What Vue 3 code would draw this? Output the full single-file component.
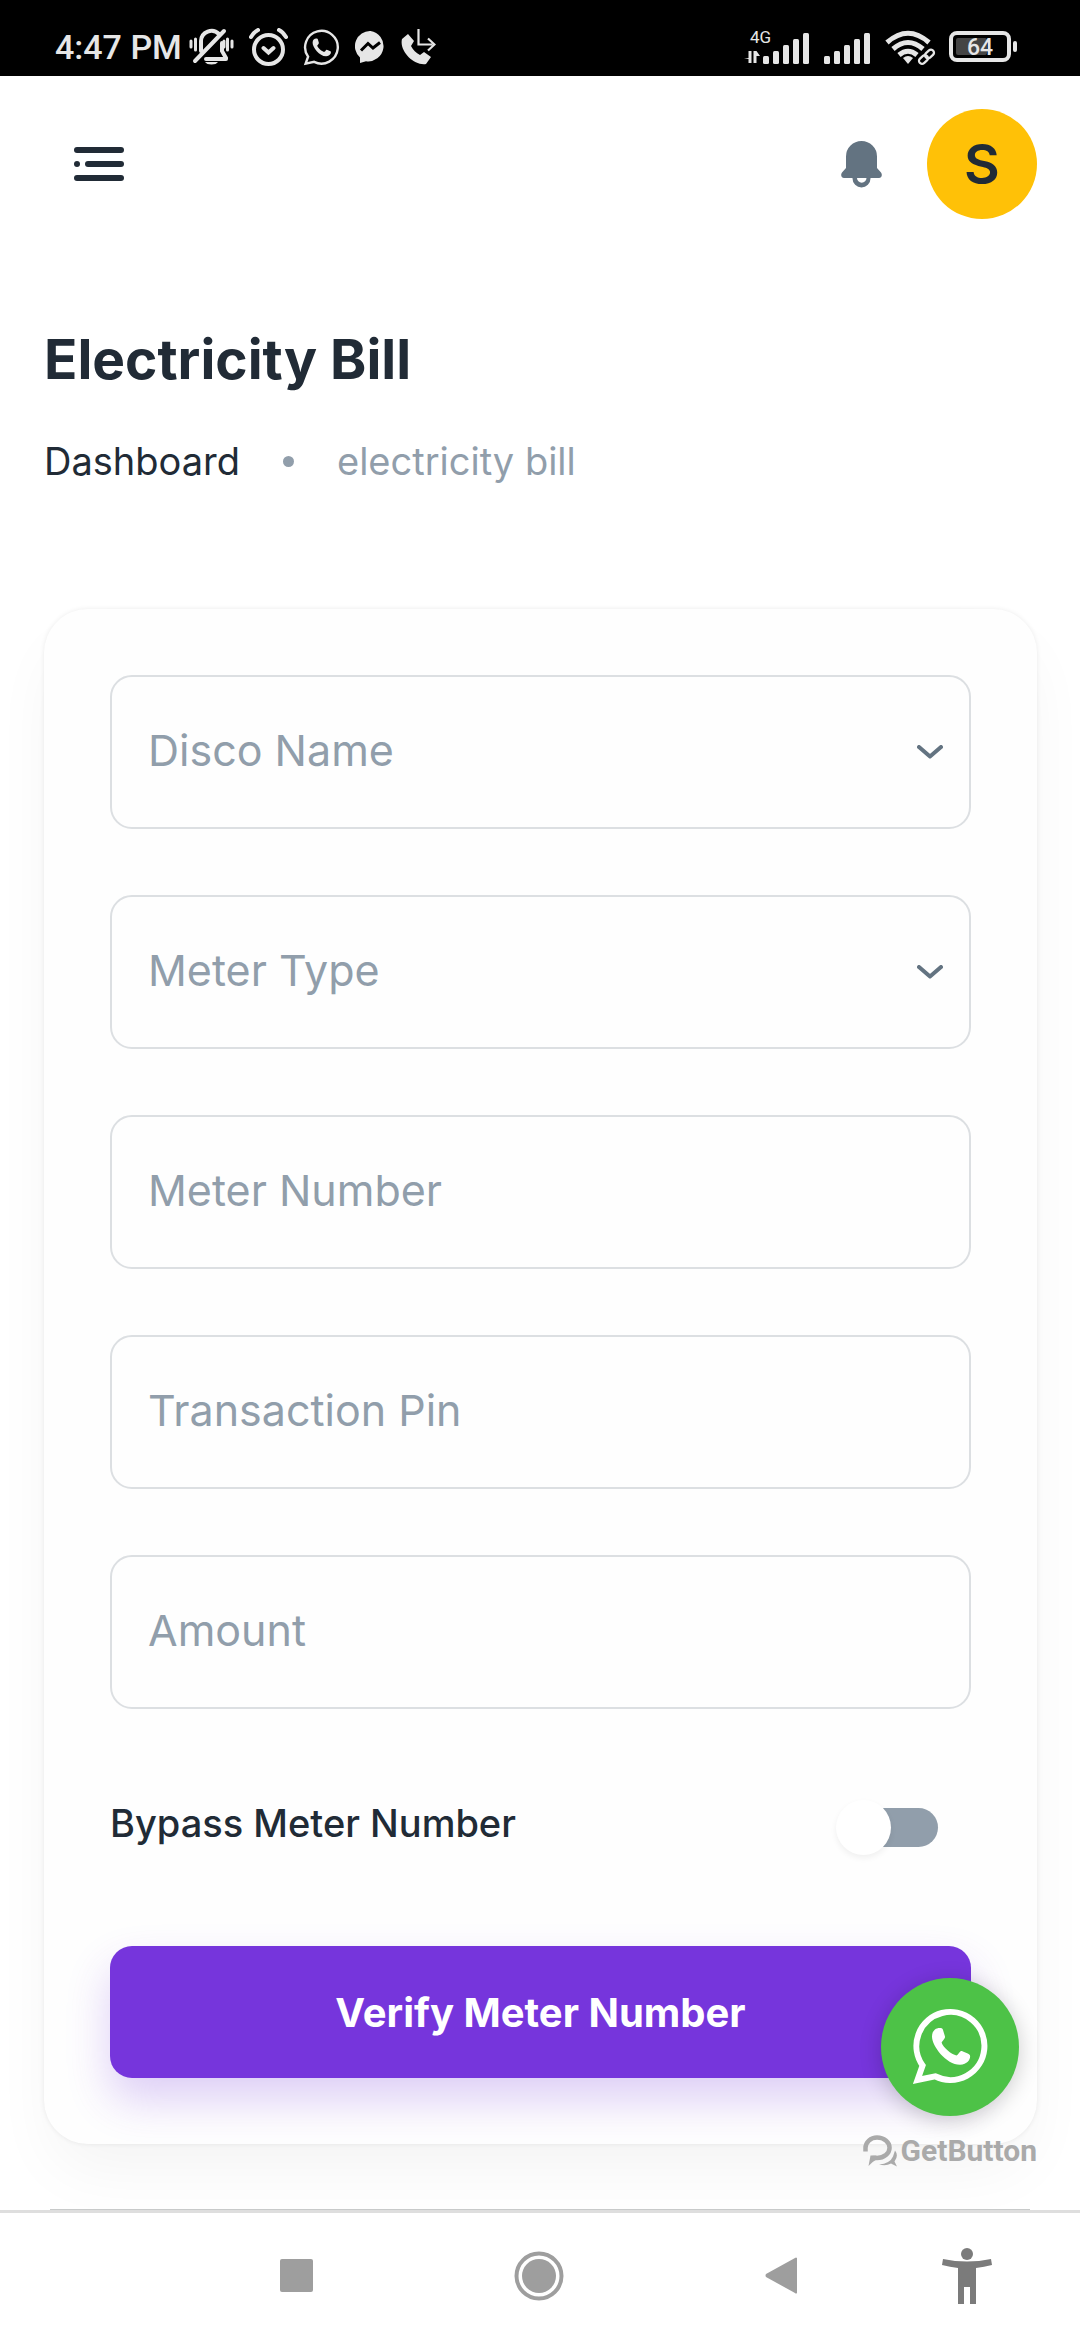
<script setup>
import { reactive, ref } from 'vue'

const fields = [
  { id: 'disco', label: 'Disco Name', options: ['Ikeja Electric', 'Eko Electric', 'Abuja Electric'] },
  { id: 'type', label: 'Meter Type', options: ['Prepaid', 'Postpaid'] },
  { id: 'meter', label: 'Meter Number', type: 'text' },
  { id: 'pin', label: 'Transaction Pin', type: 'password' },
  { id: 'amount', label: 'Amount', type: 'text' },
]
const form = reactive({ disco: '', type: '', meter: '', pin: '', amount: '' })
const bypass = ref(false)
const bars = [8, 13, 19, 25, 31]
</script>

<template>
  <div class="page">
    <header class="status">
      <div class="status-left">
        <span class="clock">4:47 PM</span>
        <svg width="45" height="38" viewBox="0 0 45 38" fill="none" stroke="#e6e6e6" stroke-linecap="round">
          <path stroke-width="3" d="M2 13v6M6.500 11v11M43 13v6M38.500 11v11M35 13v6" />
          <path stroke-width="4" d="M12 23V13a10.500 10.500 0 0 1 18-7M33 15v8l4 7M37 31H17" />
          <path stroke-width="4" d="M6 33L35 3" />
          <path fill="#e6e6e6" stroke="none" d="M16 34h13a7 4 0 0 1-13 0z" />
        </svg>
        <svg width="39" height="38" viewBox="0 0 39 38" fill="none" stroke="#e6e6e6" stroke-linecap="round">
          <circle cx="19.500" cy="21.500" r="14.500" stroke-width="4" />
          <path stroke-width="4" d="M2 9q3-5 7-7M37 9q-3-5-7-7M14.500 20l5 4.500 5-4.500" />
        </svg>
        <svg width="37" height="37" viewBox="31 30 77 77">
          <path fill="none" stroke="#e6e6e6" stroke-width="5" d="M41.600 87.500A34 34 0 1 1 54.100 98.300L36.500 102Z" />
          <path fill="#e6e6e6" d="M51 58.500C51 53 54.500 50 58.500 50C61 50 61.600 50.600 62 52L64 58.500C64.600 60.500 61.500 62.500 60.600 64.600C61.500 69 70.500 76.800 75.500 77.400C77.500 76.500 78.600 73.400 80 73C81 72.600 87 75.600 88.300 76.400C90.500 78 88.600 86.700 79 86.700C65 86.700 51 68 51 58.500Z" />
        </svg>
        <svg width="31" height="32" viewBox="0 0 31 32">
          <path fill="#e6e6e6" d="M15.500 0a15.200 15.200 0 1 1-4.500 30.200L5 32V26.500A15.200 15.200 0 0 1 15.500 0z" />
          <path fill="none" stroke="#000" stroke-width="3" d="M6 19.500l7-7 5 4.500 7-5.500" />
        </svg>
        <svg width="35" height="36" viewBox="0 0 35 36" fill="none" stroke="#e6e6e6">
          <path stroke-width="2.200" d="M17.500 0v15.500h14M27 9.500l6.500 6-6.500 6" />
          <path fill="#e6e6e6" stroke="none" d="M1 10l6-5 6 7-3 5c2 4 5 7 9 9l4-3 7 5-5 7C13 37-2 22 1 10z" />
        </svg>
      </div>
      <div class="status-right">
        <svg class="network" width="67" height="36" viewBox="0 0 67 36" fill="#e6e6e6">
          <text x="6" y="14" class="tiny">4G</text>
          <path d="M4.500 22h3v12h-3v-4L0 29h4.500zM9.500 22h3l3.500 5h-3.500v7h-3z" />
          <rect v-for="(h, i) in bars" :key="i" :x="19 + i * 10" :y="35 - h" width="6" :height="h" rx="1.500" />
        </svg>
        <svg width="48" height="36" viewBox="0 0 48 36" fill="#e6e6e6">
          <rect v-for="(h, i) in bars" :key="i" :x="i * 10" :y="35 - h" width="6" :height="h" rx="1.500" />
        </svg>
        <svg width="51" height="36" viewBox="0 0 51 36" fill="none" stroke="#e6e6e6">
          <path stroke-width="5" d="M2 13.500Q23 -5 44 13.500M8 20Q23 7 38 20M14 26Q23 18.500 32 26" />
          <path fill="#e6e6e6" stroke="none" d="M18 29q5-4 10 0l-5 6z" />
          <g stroke-width="2.300">
            <rect x="-5" y="-3" width="10" height="6" rx="3" transform="translate(38.500 30.500) rotate(-42)" />
            <rect x="-5" y="-3" width="10" height="6" rx="3" transform="translate(44.500 25) rotate(-42)" />
          </g>
        </svg>
        <svg width="69" height="32" viewBox="0 0 69 32">
          <rect x="2" y="2" width="58" height="27" rx="6" fill="none" stroke="#e6e6e6" stroke-width="4" />
          <rect x="7" y="7" width="31" height="17" rx="2" fill="#444" />
          <rect x="64" y="10" width="4" height="11" rx="2" fill="#e6e6e6" />
          <text x="31" y="24" text-anchor="middle" class="charge">64</text>
        </svg>
      </div>
    </header>

    <div class="screen">
      <div class="toolbar">
        <button class="icon-button" type="button" aria-label="Open menu">
          <svg width="50" height="34" viewBox="0 0 50 34" fill="#212b36">
            <rect width="50" height="6" rx="3" />
            <rect y="14" width="6" height="6" rx="3" />
            <rect x="11" y="14" width="39" height="6" rx="3" />
            <rect y="28" width="50" height="6" rx="3" />
          </svg>
        </button>
        <div class="actions">
          <button class="icon-button" type="button" aria-label="Notifications">
            <svg width="41" height="47" viewBox="0 0 41 47" fill="#637381">
              <path d="M5 15.500a15.500 15.500 0 0 1 31 0V27l4 4.500C42 34.500 40 37 38 37H3C1 37-1 34.500 1 31.500L5 27z" />
              <path d="M11.500 36v1.500a9 9 0 0 0 18 0V36h-4v1a4.700 4.700 0 0 1-9.500 0V36z" />
            </svg>
          </button>
          <button class="avatar" type="button" aria-label="Account">S</button>
        </div>
      </div>

      <main>
        <h1>Electricity Bill</h1>
        <nav class="crumbs" aria-label="Breadcrumb">
          <a href="#dashboard">Dashboard</a>
          <span class="dot"></span>
          <span>electricity bill</span>
        </nav>

        <form class="card" @submit.prevent>
          <div v-for="f in fields" :key="f.id" class="field">
            <select v-if="f.options" :id="f.id" v-model="form[f.id]">
              <option value=""></option>
              <option v-for="o in f.options" :key="o">{{ o }}</option>
            </select>
            <input v-else :id="f.id" v-model="form[f.id]" :type="f.type" autocomplete="off" />
            <label :for="f.id" :class="{ raised: form[f.id] }">{{ f.label }}</label>
            <svg v-if="f.options" class="chevron" width="26" height="14" viewBox="0 0 26 14">
              <path d="M2 2l11 9.500L24 2" fill="none" stroke="#637381" stroke-width="4" stroke-linecap="round" stroke-linejoin="round" />
            </svg>
          </div>

          <div class="bypass">
            <label for="bypass">Bypass Meter Number</label>
            <input id="bypass" v-model="bypass" type="checkbox" role="switch" />
          </div>

          <button class="submit" type="submit">Verify Meter Number</button>
        </form>
      </main>

      <aside class="chat">
        <a class="whatsapp" href="#whatsapp" aria-label="WhatsApp">
          <svg width="138" height="138" viewBox="0 0 138 138">
            <path fill="none" stroke="#fff" stroke-width="6" d="M41.600 87.500A34 34 0 1 1 54.100 98.300L36.500 102Z" />
            <path fill="#fff" d="M51 58.500C51 53 54.500 50 58.500 50C61 50 61.600 50.600 62 52L64 58.500C64.600 60.500 61.500 62.500 60.600 64.600C61.500 69 70.500 76.800 75.500 77.400C77.500 76.500 78.600 73.400 80 73C81 72.600 87 75.600 88.300 76.400C90.500 78 88.600 86.700 79 86.700C65 86.700 51 68 51 58.500Z" />
          </svg>
        </a>
        <a class="brand" href="#getbutton">
          <svg width="35" height="32" viewBox="0 0 35 32">
            <path fill="none" stroke="#aaa" stroke-width="4.500" d="M2.500 16.500V13a11.500 10.500 0 0 1 11.500-10.500a12.500 10.200 0 0 1 0 20.500H9.500" />
            <path fill="#aaa" d="M7.500 20.500h6v4q-4 2-8 6.500zM16 29.500q11-1 14-8l2-6q4 5-.5 11l2.500 5-6-3q-5 3-12 1z" />
          </svg>
          <span>GetButton</span>
        </a>
      </aside>
    </div>

    <footer class="system">
      <div class="keys">
        <button type="button" aria-label="Recent apps">
          <svg width="33" height="33" viewBox="0 0 33 33"><rect width="33" height="33" rx="2" fill="#9e9e9e" /></svg>
        </button>
        <button type="button" aria-label="Home">
          <svg width="50" height="50" viewBox="0 0 50 50" fill="#9e9e9e">
            <circle cx="25" cy="25" r="22.500" fill="none" stroke="#9e9e9e" stroke-width="4" />
            <circle cx="25" cy="25" r="17" />
          </svg>
        </button>
        <button type="button" aria-label="Back">
          <svg width="32" height="37" viewBox="0 0 32 37"><path fill="#9e9e9e" d="M32 1v35q-1 1-2 0L1 20q-1-1.500 0-3L30 1q1-1 2 0z" /></svg>
        </button>
      </div>
      <button type="button" aria-label="Accessibility">
        <svg width="50" height="56" viewBox="0 0 50 56" fill="#7b7b7b">
          <circle cx="25" cy="6" r="6" />
          <path d="M1 11q24 5 48 0l1 6q-8 2-16 3v36h-6V39h-6v17h-6V20q-8-1-16-3z" />
        </svg>
      </button>
    </footer>
  </div>
</template>

<style>
body {
  margin: 0;
  background: #fff;
}
</style>

<style scoped>
.page {
  box-sizing: border-box;
  min-height: 100vh;
  display: flex;
  flex-direction: column;
  font-family: Inter, "Liberation Sans", sans-serif;
  color: #212b36;
}
svg {
  display: block;
  flex: none;
}
button {
  border: 0;
  padding: 0;
  background: none;
  font-family: inherit;
  color: inherit;
}
a {
  color: inherit;
  text-decoration: none;
}
.status {
  height: 76px;
  box-sizing: border-box;
  padding: 18px 62px 0 55px;
  display: flex;
  justify-content: space-between;
  align-items: center;
  background: #000;
  color: #e6e6e6;
  font-family: Roboto, sans-serif;
}
.status-left {
  display: flex;
  align-items: center;
  gap: 15px;
}
.clock {
  font-size: 34px;
  font-weight: 500;
  line-height: 40px;
  margin-right: -8px;
}
.status-right {
  display: flex;
  align-items: center;
  gap: 13px;
}
.network {
  overflow: visible;
}
.tiny {
  font-size: 17px;
}
.charge {
  font-size: 23px;
  font-weight: 500;
  fill: #e6e6e6;
}
.screen {
  position: relative;
  flex: 1;
  border-bottom: 3px solid #dedede;
  overflow: hidden;
}
.screen::after {
  content: "";
  display: block;
  height: 1px;
  margin: 0 50px;
  background: #c8caca;
}
.toolbar {
  height: 176px;
  padding: 0 43px 0 74px;
  display: flex;
  justify-content: space-between;
  align-items: center;
}
.actions {
  display: flex;
  align-items: center;
  gap: 45px;
}
.avatar {
  width: 110px;
  height: 110px;
  border-radius: 50%;
  background: #ffc107;
  font-size: 55px;
  font-weight: 600;
}
main {
  padding: 66px 43px 65px 44px;
}
h1 {
  margin: 0;
  font-size: 55px;
  line-height: 82px;
  font-weight: 700;
}
.crumbs {
  margin-top: 32px;
  display: flex;
  align-items: center;
  gap: 43px;
  font-size: 38px;
  line-height: 58px;
  color: #919eab;
}
.crumbs a {
  color: #212b36;
}
.dot {
  width: 11px;
  height: 11px;
  border-radius: 50%;
  background: #919eab;
}
.card {
  margin-top: 119px;
  padding: 66px;
  display: flex;
  flex-direction: column;
  gap: 66px;
  border-radius: 44px;
  background: #fefefe;
  box-shadow: 0 0 5px rgba(0, 0, 0, 0.08), 0 33px 66px -11px rgba(0, 0, 0, 0.05);
}
.field {
  display: grid;
  align-items: center;
}
.field > * {
  grid-area: 1 / 1;
}
.field input,
.field select {
  box-sizing: border-box;
  width: 100%;
  height: 154px;
  padding: 0 38px;
  border: 2px solid #dcdfe2;
  border-radius: 22px;
  background: transparent;
  appearance: none;
  font-family: inherit;
  font-size: 43px;
  color: inherit;
}
.field label {
  margin-left: 38px;
  justify-self: start;
  padding-bottom: 4px;
  font-size: 43px;
  line-height: 64px;
  color: #919eab;
  pointer-events: none;
}
.field .raised {
  align-self: start;
  font-size: 28px;
  line-height: 44px;
}
.chevron {
  justify-self: end;
  margin-right: 28px;
  pointer-events: none;
}
.bypass {
  height: 105px;
  padding-right: 33px;
  display: flex;
  justify-content: space-between;
  align-items: center;
}
.bypass label {
  padding-bottom: 10px;
  font-size: 38px;
  line-height: 58px;
  font-weight: 500;
}
.bypass input {
  margin: 0;
  width: 94px;
  height: 39px;
  display: flex;
  align-items: center;
  appearance: none;
  border-radius: 20px;
  background: #919eab;
}
.bypass input::before {
  content: "";
  width: 55px;
  height: 55px;
  flex: none;
  margin-left: -8px;
  border-radius: 50%;
  background: #fff;
  box-shadow: 0 3px 6px rgba(0, 0, 0, 0.06);
}
.bypass input:checked {
  background: #7635dc;
}
.bypass input:checked::before {
  margin-left: 47px;
}
.submit {
  height: 132px;
  border-radius: 22px;
  background: #7635dc;
  box-shadow: 0 22px 44px rgba(118, 53, 220, 0.24);
  color: #fff;
  font-size: 40px;
  font-weight: 700;
}
.chat {
  position: absolute;
  right: 43px;
  bottom: 40px;
  display: flex;
  flex-direction: column;
  align-items: center;
  gap: 16px;
}
.whatsapp {
  border-radius: 50%;
  background: #4dc247;
  box-shadow: 0 4px 22px rgba(0, 0, 0, 0.2);
}
.brand {
  display: flex;
  align-items: center;
  gap: 3px;
  font-family: Roboto, sans-serif;
  font-size: 30px;
  line-height: 38px;
  font-weight: 700;
  color: #aaa;
}
.system {
  box-sizing: border-box;
  height: 127px;
  padding: 0 88px 2px 280px;
  display: flex;
  justify-content: space-between;
  align-items: center;
}
.keys {
  display: flex;
  align-items: center;
  gap: 201px;
}
</style>
